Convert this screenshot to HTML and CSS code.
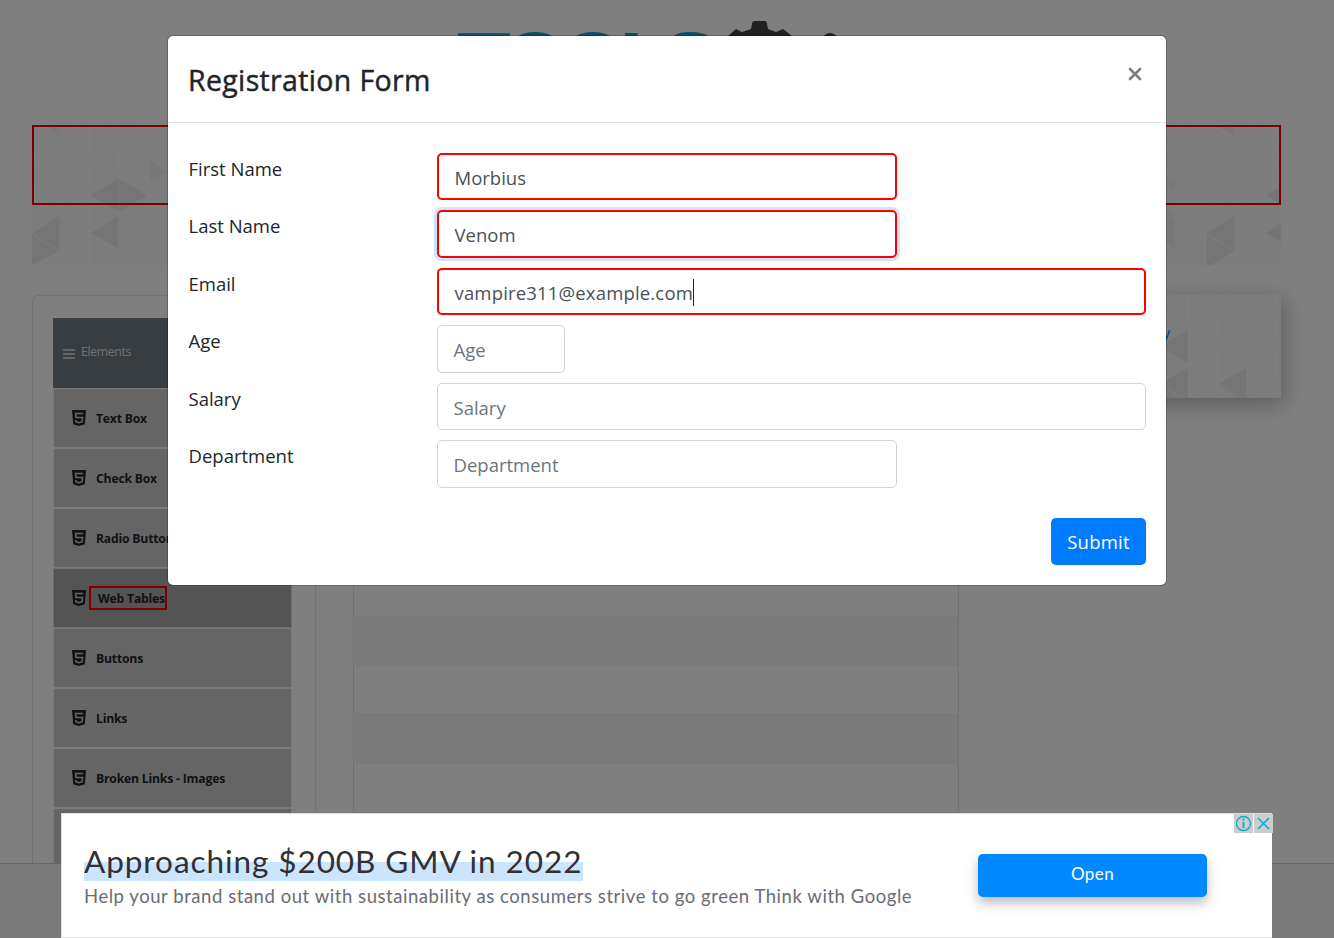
FILE: index.html
```html
<!DOCTYPE html>
<html lang="en">
<head>
<meta charset="utf-8">
<title>Registration Form</title>
<link rel="stylesheet" href="styles.css">
</head>
<body>
<svg width="0" height="0" class="defs" aria-hidden="true">
  <defs>
    <pattern id="lattice" x="-1.4" y="33.2" width="58.75" height="37.4" patternUnits="userSpaceOnUse">
      <path d="M0 0V37.4M29.4 0V37.4M58.75 0V37.4M0 0L58.75 37.4M58.75 0L0 37.4" fill="none" stroke="#fff" stroke-opacity=".6" stroke-width="1.5"/>
    </pattern>
    <pattern id="lattice-side" x="1.75" y="14.6" width="58.75" height="37.4" patternUnits="userSpaceOnUse">
      <path d="M0 0V37.4M29.4 0V37.4M58.75 0V37.4M0 0L58.75 37.4M58.75 0L0 37.4" fill="none" stroke="#fff" stroke-opacity=".6" stroke-width="1.5"/>
    </pattern>
    <symbol id="html5" viewBox="0 0 14 16">
      <path d="M0 0H14L12.8 14.2 7 16 1.2 14.2Z" fill="#212529"/>
      <path d="M11 3.6H3.6L3.9 7.6H10.5L10.1 11.7 7 12.7 3.9 11.7 3.8 10" fill="none" stroke="#cacaca" stroke-width="1.5"/>
    </symbol>
  </defs>
</svg>
<div class="page">
  <header class="top">
    <svg class="logo" width="440" height="100" viewBox="0 0 440 100">
      <text class="logo-text" x="5 49 107 167 209" y="79">TOOLS</text>
      <g fill="#404040">
        <path d="M300 10Q300 7 303 7H312Q315 7 315 10L316 15 324 18 331 15 340 22 335 32 340 45 331 60 284 60 275 45 281 32 276 22 284 15 290 18 299 15Z"/>
        <circle cx="378" cy="28" r="9"/>
      </g>
    </svg>
  </header>
  <div class="banner">
    <svg class="pattern" width="1249" height="140">
      <g fill="#ebebeb">
        <path d="M0 108L28 90V125ZM0 108L28 125 0 140ZM58 108L87 90V124Z"/>
        <path d="M58 70L87 53V87ZM87 53L117 70 87 87Z"/>
        <path d="M1174 108L1203 90V126ZM1174 108L1203 126 1174 143ZM1233 108L1249 98V117ZM1233 70L1249 60V79Z"/>
      </g>
      <path fill="#f1f1f1" d="M117 35L137 47 117 56ZM14 0H28V11ZM1134 55H1143V65L1134 63ZM1134 80L1143 88V123L1134 118ZM1182 0H1203V11Z"/>
      <rect width="1249" height="140" fill="url(#lattice)"/>
    </svg>
    <div class="banner-link"></div>
  </div>
  <main class="content">
    <nav class="panel">
      <div class="group"><svg width="12" height="10"><path d="M0 1H12M0 5H12M0 9H12" stroke="#e4e4e4" stroke-width="1.4"/></svg><span>Elements</span></div>
      <ul class="menu">
        <li><svg width="14" height="16"><use href="#html5"/></svg><span>Text Box</span></li>
        <li><svg width="14" height="16"><use href="#html5"/></svg><span>Check Box</span></li>
        <li><svg width="14" height="16"><use href="#html5"/></svg><span>Radio Button</span></li>
        <li class="active"><svg width="14" height="16"><use href="#html5"/></svg><span class="marked">Web Tables</span></li>
        <li><svg width="14" height="16"><use href="#html5"/></svg><span>Buttons</span></li>
        <li><svg width="14" height="16"><use href="#html5"/></svg><span>Links</span></li>
        <li><svg width="14" height="16"><use href="#html5"/></svg><span>Broken Links - Images</span></li>
        <li></li>
      </ul>
    </nav>
    <section class="table">
      <div class="row"><i></i><i></i><i></i><i></i><i></i><i></i></div>
      <div class="row odd"><i></i><i></i><i></i><i></i><i></i><i></i></div>
      <div class="row"><i></i><i></i><i></i><i></i><i></i><i></i></div>
      <div class="row odd"><i></i><i></i><i></i><i></i><i></i><i></i></div>
      <div class="row"><i></i><i></i><i></i><i></i><i></i><i></i></div>
      <div class="row odd"><i></i><i></i><i></i><i></i><i></i><i></i></div>
    </section>
    <aside class="side">
      <svg class="pattern" width="300" height="104">
        <path fill="#ebebeb" d="M178 52L207 36V70ZM178 90L207 74V104H186ZM237 90L266 74V104H255Z"/>
        <rect width="300" height="104" fill="url(#lattice-side)"/>
      </svg>
      <a class="side-link">y</a>
    </aside>
  </main>
  <footer class="foot"></footer>
</div>
<div class="backdrop"></div>
<div class="modal">
  <div class="modal-head">
    <h1>Registration Form</h1>
    <svg class="close" width="14" height="14"><path d="M2 2L12 12M12 2L2 12" stroke="#7f7f7f" stroke-width="2.7" stroke-linecap="round"/></svg>
  </div>
  <form class="form">
    <div class="field"><label>First Name</label><div class="control mid red">Morbius</div></div>
    <div class="field"><label>Last Name</label><div class="control mid red focus">Venom</div></div>
    <div class="field"><label>Email</label><div class="control red"><span class="email">vampire311@example.com</span></div></div>
    <div class="field"><label>Age</label><div class="control small empty">Age</div></div>
    <div class="field"><label>Salary</label><div class="control empty">Salary</div></div>
    <div class="field"><label>Department</label><div class="control mid empty">Department</div></div>
    <button class="submit" type="button">Submit</button>
  </form>
</div>
<div class="ad">
  <div class="ad-copy">
    <div class="ad-title">Approaching $200B GMV in 2022</div>
    <div class="ad-text">Help your brand stand out with sustainability as consumers strive to go green Think with Google</div>
  </div>
  <div class="ad-open">Open</div>
  <div class="ad-tools">
    <svg width="19" height="19"><rect width="19" height="19" fill="#ccc"/><circle cx="9.5" cy="9.5" r="7" fill="none" stroke="#00aecd" stroke-width="1.3"/><path d="M9.5 4.5V6.5M9.5 8V14" stroke="#00aecd" stroke-width="1.8"/></svg>
    <svg width="19" height="19"><rect width="19" height="19" fill="#ccc"/><path d="M4 4L15 15M15 4L4 15" stroke="#00aecd" stroke-width="1.6"/></svg>
  </div>
</div>
</body>
</html>
```
FILE: styles.css
```css
* { box-sizing: border-box; }
body {
  margin: 0;
  width: 1334px;
  height: 938px;
  overflow: hidden;
  font-family: "Open Sans", "Noto Sans", sans-serif;
  color: #212529;
  background: #fff;
}
.defs { position: absolute; }
svg { display: block; flex: none; }
.page { height: 938px; display: flex; flex-direction: column; overflow: hidden; }
.top { height: 125px; padding: 14px 0 0 452px; flex: none; }
.logo-text { font: bold 88px "Liberation Sans", sans-serif; fill: #12a0cf; }
.banner { position: relative; width: 1249px; height: 140px; margin-left: 32px; flex: none; background: #f9f9f9; }
.pattern { position: absolute; left: 0; top: 0; }
.banner-link { position: relative; height: 80px; border: 2px solid #f00; }
.content { height: 598px; padding: 30px 0 0 32px; display: flex; flex: none; align-items: flex-start; overflow: hidden; }
.panel { width: 284px; height: 620px; padding: 22px 23px 0 20px; border: 1px solid #e5e5e5; border-radius: 6px; flex: none; }
.group { height: 70px; width: 239px; padding: 0 0 3px 10px; display: flex; align-items: center; gap: 6px; background: #6e7a80; color: #e4e4e4; font-size: 12.2px; letter-spacing: -.3px; }
.group svg { margin-top: 4px; }
.menu { list-style: none; margin: 0; padding: 0; width: 239px; }
.menu li { height: 60px; padding-left: 18px; display: flex; align-items: center; gap: 10px; background: #cbcbcb; border: 1px solid #f6f6f6; font-size: 12.2px; font-weight: 700; letter-spacing: -.2px; white-space: nowrap; }
.menu li.active { background: #a8a8a8; border-color: #dcdfe1; }
.marked { height: 24px; width: 78px; margin-left: -7px; padding-left: 7px; border: 2px solid #f00; line-height: 21px; }
.table { width: 606px; height: 600px; margin-left: 37px; padding-top: 272px; border: 1px solid #e4e4e4; flex: none; }
.row { height: 49px; margin: 0 0 0 1px; display: grid; grid-template-columns: 125px 125px 50px 125px 100px 1fr; border-bottom: 1px solid #f0f0f0; }
.row i { border-right: 1px solid #fafafa; }
.row.odd { background: #f7f7f7; }
.row.odd i { border-color: #f3f3f3; }
.side { position: relative; width: 300px; height: 104px; margin: -1px 0 0 22px; background: #f9f9f9; box-shadow: 3px 6px 20px rgba(0,0,0,.28); flex: none; }
.side-link { position: absolute; left: 182px; top: 29px; font-size: 14px; color: #007bff; }
.foot { flex: 1; border-top: 1px solid #cfcfcf; background: #f5f5f5; }
.backdrop { position: absolute; inset: 0; background: rgba(0,0,0,.5); }
.modal { position: absolute; left: 167px; top: 35px; width: 1000px; height: 551px; border: 1px solid rgba(0,0,0,.2); border-radius: 6px; background: #fff; background-clip: padding-box; }
.modal-head { height: 87px; padding: 0 24px 0 20px; border-bottom: 1px solid #dee2e6; display: flex; justify-content: space-between; }
h1 { margin: 24px 0 0; font-size: 28.5px; line-height: 40px; font-weight: 500; letter-spacing: .35px; -webkit-text-stroke: .45px #212529; white-space: nowrap; }
.close { margin-top: 31px; }
.form { padding: 29.6px 20px 0 21px; display: flex; flex-direction: column; gap: 10px; }
.field { display: grid; grid-template-columns: 248px 1fr; height: 47.5px; font-size: 18.5px; }
label { line-height: 32px; margin-left: -.5px; }
.control { height: 47.5px; border: 1px solid #ced4da; border-radius: 5px; padding: 2px 0 0 15.5px; line-height: 44px; color: #495057; white-space: nowrap; }
.control.mid { width: 460px; }
.control.small { width: 128px; }
.control.empty { color: #6c757d; }
.control.red { border: 2px solid #f00; line-height: 42px; }
.control.focus { box-shadow: 0 0 0 3px #cce5ff; }
.email { display: inline-block; height: 27px; line-height: 27px; border-right: 1px solid #222; letter-spacing: .17px; }
.submit { align-self: flex-end; width: 95px; height: 47px; margin-top: 20px; padding: 0; border: 0; border-radius: 5px; background: #007bff; color: #fff; font: 18.5px "Open Sans", sans-serif; letter-spacing: .25px; }
.ad { position: absolute; left: 61px; top: 813px; width: 1211px; height: 125px; padding: 0 65px 0 22px; display: flex; justify-content: space-between; background: #fff; border: 1px solid #dedede; border-right: 0; }
.ad-copy { white-space: nowrap; font-family: Lato, sans-serif; }
.ad-title { width: 499px; height: 33px; margin-top: 34px; line-height: 27px; font-size: 31.5px; letter-spacing: .93px; color: #303134; background: linear-gradient(#fff 14px, #cce5ff 14px); }
.ad-text { margin-top: 3px; line-height: 25px; font-size: 18.5px; letter-spacing: .55px; color: #6a6d70; }
.ad-open { width: 229px; height: 43px; margin-top: 40px; border-radius: 5px; background: #08f; color: #fff; font: 17px/40px Lato, sans-serif; letter-spacing: .4px; text-align: center; box-shadow: 0 6px 12px rgba(60,64,80,.35); }
.ad-tools { position: absolute; right: -1px; top: 0; display: flex; gap: 1px; }
```
